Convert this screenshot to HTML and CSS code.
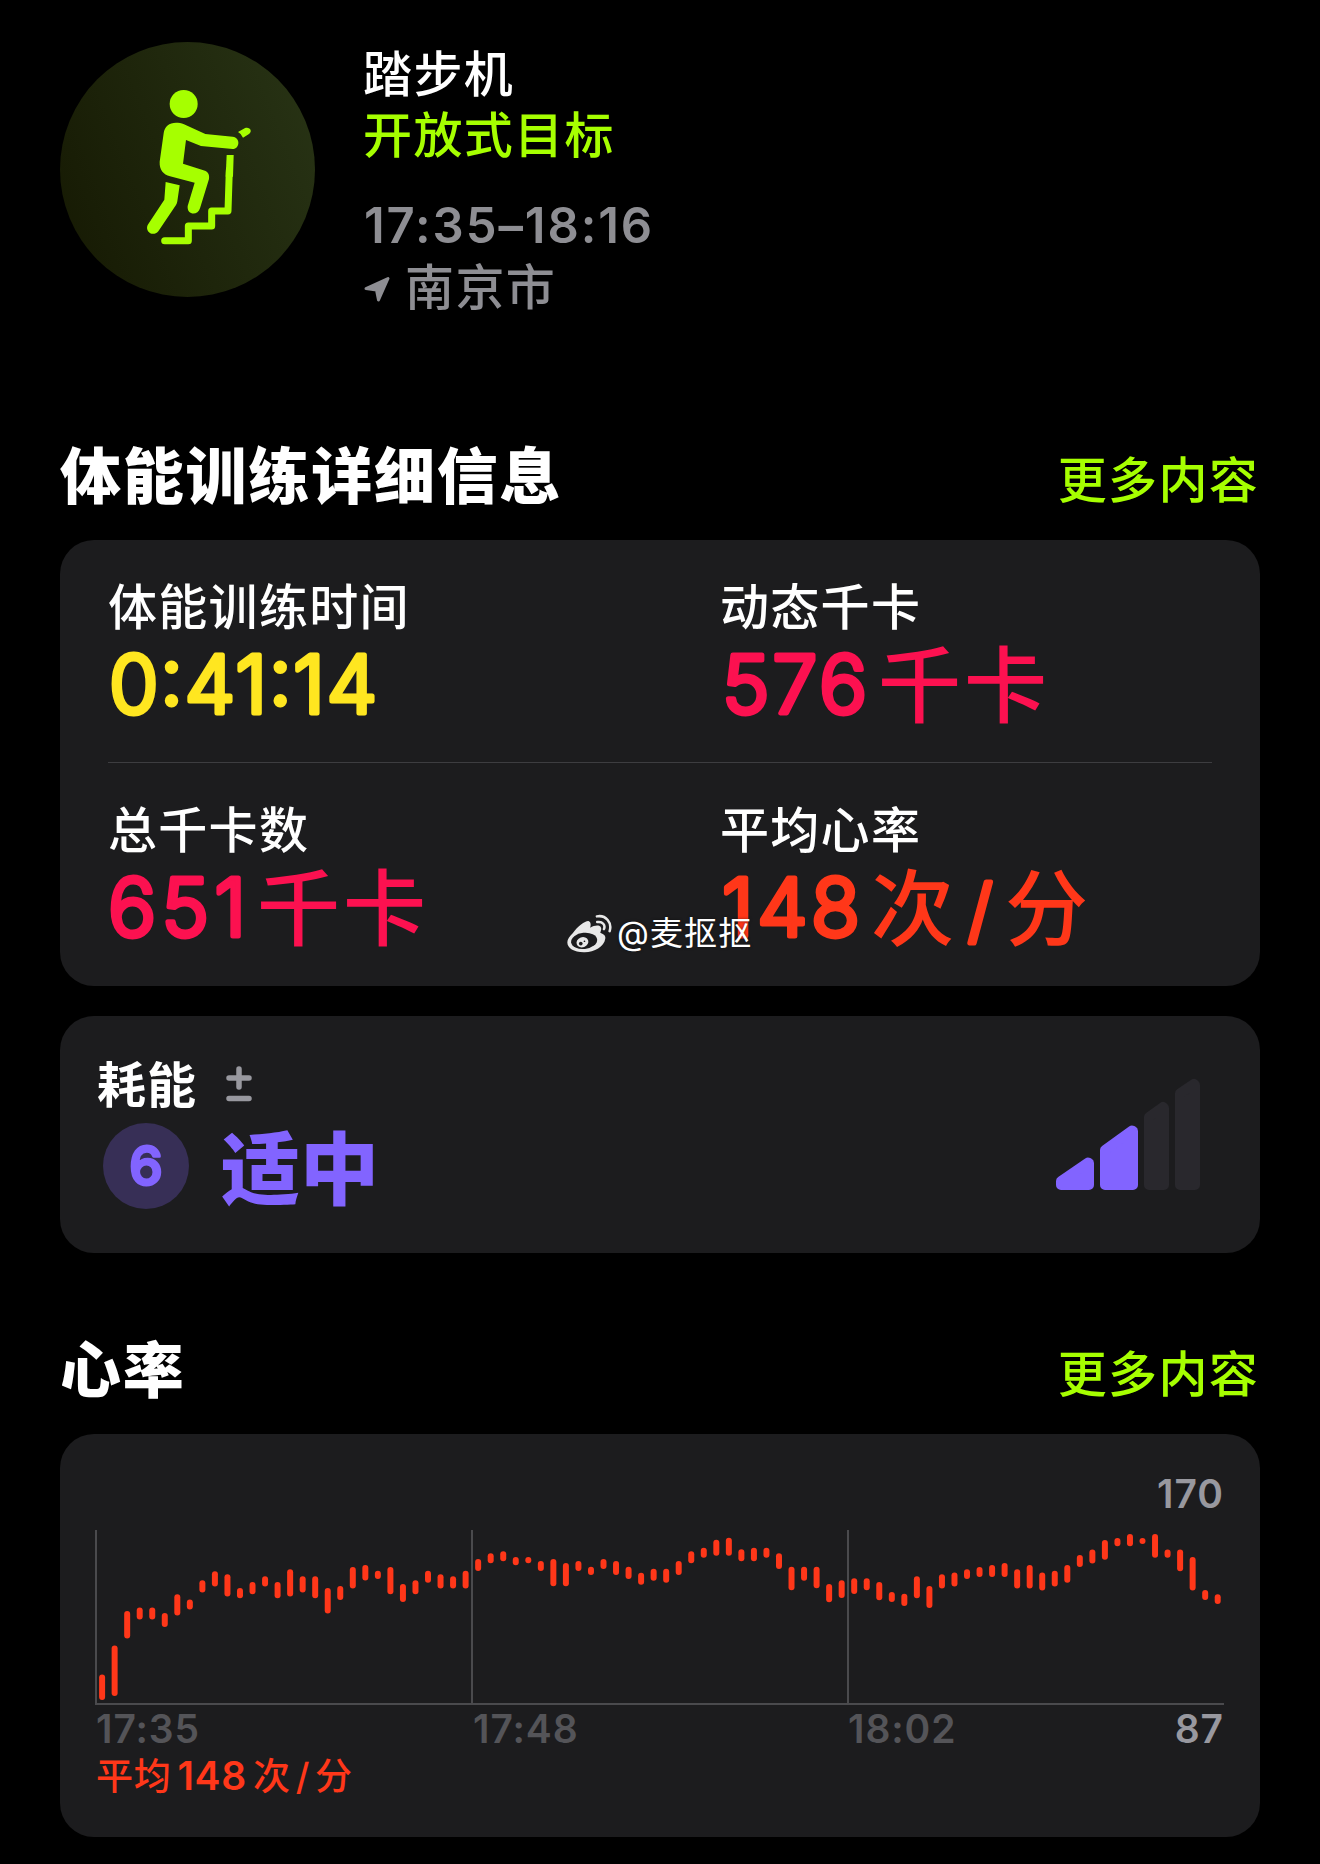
FILE: index.html
```html
<!DOCTYPE html>
<html lang="zh-CN">
<head>
<meta charset="UTF-8">
<meta name="viewport" content="width=device-width, initial-scale=1">
<title>体能训练 - 踏步机</title>
<link rel="stylesheet" href="styles.css">
</head>
<body>

<header class="workout">
    <svg class="workout-icon" viewBox="-180 -84 765 765">
        <defs>
            <linearGradient id="badge" x1="0" y1="0.7" x2="1" y2="0.3">
                <stop offset="0" stop-color="#171b04"/>
                <stop offset="1" stop-color="#273214"/>
            </linearGradient>
        </defs>
        <circle cx="202.500" cy="298.500" r="382.500" fill="url(#badge)"/>
        <g fill="#a6ff00">
            <circle cx="191" cy="102" r="42"/>
            <path d="M168 158C148 158 133 170 131 190L119 275C118 300 130 313 150 319L224 338L203 408C200 436 234 438 240 415L267 327C269 313 264 306 255 302L189 281L198 210L243 228L338 237C360 236 362 203 338 200L256 192L192 163C184 159 176 158 168 158Z"/>
            <path d="M137 336L179 346L172 394Q171 400 168 405L115 484C99 502 74 485 83 465L133 389Z"/>
            <path d="M354 186L374 175C389 169 399 184 387 192L369 203Q364 191 354 186Z"/>
            <path d="M320 255H341L339 320H317Z"/>
        </g>
        <path d="M134 512H205V468H275V423H324L328 300" fill="none" stroke="#a6ff00" stroke-width="21" stroke-linecap="round" stroke-linejoin="round"/>
    </svg>
    <div class="workout-info">
        <div class="name">踏步机</div>
        <div class="goal">开放式目标</div>
        <div class="time">17:35–18:16</div>
        <div class="place">
            <svg class="arrow" viewBox="0 0 26 26"><path d="M2 12.500L24 2.500L14.500 24L12.500 14Z"/></svg>
            <span>南京市</span>
        </div>
    </div>
</header>

<section>
    <div class="section-head">
        <h2>体能训练详细信息</h2>
        <a class="more">更多内容</a>
    </div>
    <div class="card details">
        <div class="detail-row">
            <div class="cell">
                <div class="label">体能训练时间</div>
                <svg class="value yellow" viewBox="0 -20 490 120"><text class="num" x="1" y="75.500" textLength="268">0:41:14</text></svg>
            </div>
            <div class="cell">
                <div class="label">动态千卡</div>
                <svg class="value pink" viewBox="0 -20 490 120"><text class="num" x="2" y="75.500" textLength="145">576</text><text class="unit" x="158" y="79">千卡</text></svg>
            </div>
        </div>
        <div class="detail-row">
            <div class="cell">
                <div class="label">总千卡数</div>
                <svg class="value pink" viewBox="0 -20 490 120"><text class="num" x="0" y="75.500" textLength="138">651</text><text class="unit" x="149" y="79">千卡</text></svg>
            </div>
            <div class="cell">
                <div class="label">平均心率</div>
                <svg class="value red" viewBox="0 -20 490 120"><text class="num" x="2" y="75.500" textLength="138">148</text><text class="unit" x="151" y="79">次</text><text class="num slash" x="248" y="75">/</text><text class="unit" x="285" y="79">分</text></svg>
            </div>
        </div>

        <div class="watermark">
            <svg viewBox="80 66 134 116">
                <path fill="#e8e8e8" d="M97 123C112 103 133 87 143 87C151 89 152 98 149 107C160 100 175 98 180 104C184 110 181 115 179 122C191 126 196 132 194 140C190 165 160 181 130 180C100 179 81 168 81 150C81 140 88 132 97 123Z"/>
                <ellipse cx="131" cy="146" rx="39" ry="24" fill="#1c1c1e" transform="rotate(-6 131 146)"/>
                <ellipse cx="126" cy="150" rx="18" ry="15" fill="#e8e8e8" transform="rotate(-20 126 150)"/>
                <circle cx="121" cy="154" r="5.500" fill="#1c1c1e"/>
                <circle cx="132" cy="147" r="2.500" fill="#1c1c1e"/>
                <path d="M169 73C196 68 215 92 207 117M170 90C186 87 195 99 190 111" fill="none" stroke="#e8e8e8" stroke-width="7.500" stroke-linecap="round"/>
            </svg>
            <span>@麦抠抠</span>
        </div>
    </div>
</section>

<div class="card effort">
    <div>
        <div class="effort-head">
            <span>耗能</span>
            <svg class="plus-minus" viewBox="0 0 26 36"><path d="M3 12H23M13 3V21M3 32.500H23"/></svg>
        </div>
        <div class="effort-value">
            <svg class="level" viewBox="0 0 86 86"><circle cx="43" cy="43" r="43"/><text x="43" y="61.500" text-anchor="middle">6</text></svg>
            <span>适中</span>
        </div>
    </div>
    <svg class="signal" viewBox="0 0 144 112">
        <path class="on" d="M5 103L32 84.500L33 85V107H5Z"/>
        <path class="on" d="M49 72L76 52.500L77 53V107H49Z"/>
        <path class="off" d="M93 39L107 29L108 30V107H93Z"/>
        <path class="off" d="M124 15.500L138 6L139 7V107H124Z"/>
    </svg>
</div>

<section class="heart">
    <div class="section-head">
        <h2>心率</h2>
        <a class="more">更多内容</a>
    </div>
    <div class="card chart-card">
        <div class="max">170</div>
        <svg class="chart" id="chart" viewBox="0 0 1130 176">
            <path class="grid" d="M1 0V174M377 0V174M753 0V174M0 174H1129"/>
        </svg>
        <div class="axis">
            <span>17:35</span>
            <span>17:48</span>
            <span>18:02</span>
            <span class="min">87</span>
        </div>
        <div class="average">平均<b>148</b>次<i>/</i>分</div>
    </div>
</section>

<script>
// Heart rate ranges: [top, bottom] of each bar
const ranges = [
    [144.6,170],[115.6,166],[81,108.5],[77.4,89.5],[77.4,89.5],[83.1,97],[64.2,85.5],[69.6,79.4],[50.3,62.5],[41.2,56.4],
    [44.2,66.5],[58.1,68.2],[52,64.2],[46.3,56.4],[52,68.2],[39.2,66.5],[46.3,62.5],[46.3,68.2],[58.1,83.4],[56.1,69.9],
    [37.1,58.4],[35.1,50.6],[40.8,49],[37.1,64.2],[54,72],[50.3,64.2],[40.8,52.7],[44.2,58.4],[46.3,58.4],[40.8,58.4],
    [29,41],[23.3,33.3],[21.3,31.3],[27,35.3],[27,33.3],[31,41],[29,56.3],[33,56.3],[31,41],[36.7,45],
    [29,39],[31,45],[36.7,49],[42.7,54.7],[38.7,50.7],[38.7,52.7],[31,45],[21.3,33.3],[17.7,27.7],[9.7,25.7],
    [7.7,25.7],[19.3,31.3],[17.7,31.3],[17.7,27.7],[23.3,39],[36.7,60.3],[36.7,50.7],[36.7,58.3],[54,72.3],[50.3,68],
    [48.3,64],[48.3,60.3],[52,70.3],[62.1,72],[63.8,76],[46.3,68.2],[56.1,78],[44.2,58.4],[42.5,56.4],[39.2,49],
    [37.1,46.9],[35.1,46.9],[33.1,46.9],[39.2,58.4],[35.1,58.4],[42.5,60.5],[40.8,56.4],[35.1,52.7],[25,37.1],[19.5,33.4],
    [10.1,29.7],[8.1,16.2],[4,16.2],[8.1,14.1],[4,27.7],[19.5,27.7],[19.5,41.2],[27,60.5],[60.1,69.9],[64.2,74]
];
const chart = document.getElementById('chart');
ranges.forEach(([top, bottom], i) => {
    const bar = document.createElementNS('http://www.w3.org/2000/svg', 'rect');
    bar.setAttribute('class', 'bar');
    bar.setAttribute('x', (4.1 + i * 12.535).toFixed(2));
    bar.setAttribute('y', top);
    bar.setAttribute('width', 6);
    bar.setAttribute('height', (bottom - top).toFixed(1));
    bar.setAttribute('rx', 3);
    chart.appendChild(bar);
});
</script>
</body>
</html>
```
FILE: styles.css
```css
* {
    box-sizing: border-box;
}
body {
    margin: 0;
    padding: 42px 60px 27px;
    background: #000;
    color: #fff;
    font-family: Inter, "Noto Sans CJK SC", sans-serif;
    font-size: 49px;
    font-weight: 500;
}
svg {
    display: block;
    flex: none;
}

/* Header */
.workout {
    display: flex;
    gap: 48px;
    margin-bottom: 121px;
}
.workout-icon {
    width: 255px;
    height: 255px;
}
.workout-info {
    padding-top: 2px;
    line-height: 61px;
    letter-spacing: 1.4px;
}
.goal {
    color: #a6ff00;
}
.time {
    margin: 29px 0 1px 1px;
    color: #8e8e93;
    font-weight: 600;
    letter-spacing: 1.9px;
}
.place {
    display: flex;
    align-items: center;
    gap: 15px;
    height: 60px;
    margin-left: 1px;
    color: #8e8e93;
}
.arrow {
    width: 26px;
    height: 26px;
    margin-top: 3px;
    fill: #8e8e93;
    stroke: #8e8e93;
    stroke-width: 3;
    stroke-linejoin: round;
}

/* Section titles */
.section-head {
    display: flex;
    justify-content: space-between;
    align-items: flex-end;
    margin-bottom: 24px;
}
h2 {
    margin: 0;
    font-size: 61px;
    font-weight: 900;
    line-height: 78px;
    letter-spacing: 1.8px;
}
.more {
    color: #a6ff00;
    line-height: 70px;
    letter-spacing: 1.3px;
    margin-right: 1px;
}

.card {
    background: #1c1c1e;
    border-radius: 34px;
}

/* Details */
.details {
    position: relative;
    height: 446px;
    padding: 0 48px;
}
.detail-row {
    display: grid;
    grid-template-columns: 612px 1fr;
    height: 223px;
    padding-top: 38px;
}
.detail-row:first-child {
    border-bottom: 1px solid #3d3d40;
}
.label {
    line-height: 60px;
    letter-spacing: 1.3px;
}
.value {
    width: 490px;
    height: 120px;
    margin-top: -21px;
}
.num {
    font-size: 80px;
    font-weight: 300;
    stroke-width: 5;
    stroke-linejoin: round;
}
.slash {
    font-size: 70px;
}
.unit {
    font-size: 83px;
    letter-spacing: 3px;
}
.yellow { fill: #ffe620; }
.pink { fill: #fc1150; }
.red { fill: #ff3719; }
.yellow .num { stroke: #ffe620; }
.pink .num { stroke: #fc1150; }
.red .num { stroke: #ff3719; }

.watermark {
    position: absolute;
    left: 507px;
    top: 371px;
    display: flex;
    align-items: center;
    gap: 5px;
    font-size: 33px;
    font-weight: 400;
    line-height: 44px;
    letter-spacing: 1.1px;
    text-shadow: 0 0 3px rgba(0, 0, 0, 0.5);
}
.watermark svg {
    width: 45px;
    height: 39px;
}

/* Effort */
.effort {
    display: flex;
    justify-content: space-between;
    height: 237px;
    margin-top: 30px;
    padding: 40px 60px 0 37px;
}
.effort-head {
    display: flex;
    gap: 29px;
    line-height: 60px;
    letter-spacing: 1px;
    font-weight: 600;
}
.plus-minus {
    width: 26px;
    height: 36px;
    margin-top: 10px;
    fill: none;
    stroke: #98989f;
    stroke-width: 5.5;
    stroke-linecap: round;
}
.effort-value {
    display: flex;
    gap: 32px;
    height: 86px;
    margin: 7px 0 0 6px;
    color: #8264ff;
    font-size: 79px;
    font-weight: 800;
    line-height: 94px;
}
.level {
    width: 86px;
    height: 86px;
    fill: #372f56;
}
.level text {
    fill: #8264ff;
    stroke: #8264ff;
    stroke-width: 3;
    stroke-linejoin: round;
    font-size: 53px;
    font-weight: 500;
}
.signal {
    width: 144px;
    height: 112px;
    margin-top: 22px;
    stroke-width: 10;
    stroke-linejoin: round;
}
.on {
    fill: #8264ff;
    stroke: #8264ff;
}
.off {
    fill: #29282d;
    stroke: #29282d;
}

/* Heart rate */
.heart {
    margin-top: 79px;
}
.chart-card {
    height: 403px;
    padding: 35px 36px 0 35px;
    font-size: 39px;
}
.max {
    line-height: 50px;
    text-align: right;
    color: #98989f;
    font-weight: 600;
    letter-spacing: 1px;
}
.chart {
    width: 1130px;
    height: 176px;
    margin-top: 11px;
}
.grid {
    fill: none;
    stroke: #4a4a4d;
    stroke-width: 2;
}
.bar {
    fill: #ff3719;
}
.axis {
    display: grid;
    grid-template-columns: 377px 375px 1fr auto;
    line-height: 46px;
    color: #545458;
    font-weight: 600;
    letter-spacing: 0.9px;
    padding-left: 1px;
}
.min {
    color: #98989f;
}
.average {
    margin: 0 0 0 1px;
    line-height: 48px;
    font-size: 37px;
    letter-spacing: 0.7px;
    color: #ff3719;
}
.average b {
    margin: 0 6px;
    font-size: 39px;
    font-weight: 600;
}
.average i {
    margin: 0 5px;
    font-style: normal;
}
```
